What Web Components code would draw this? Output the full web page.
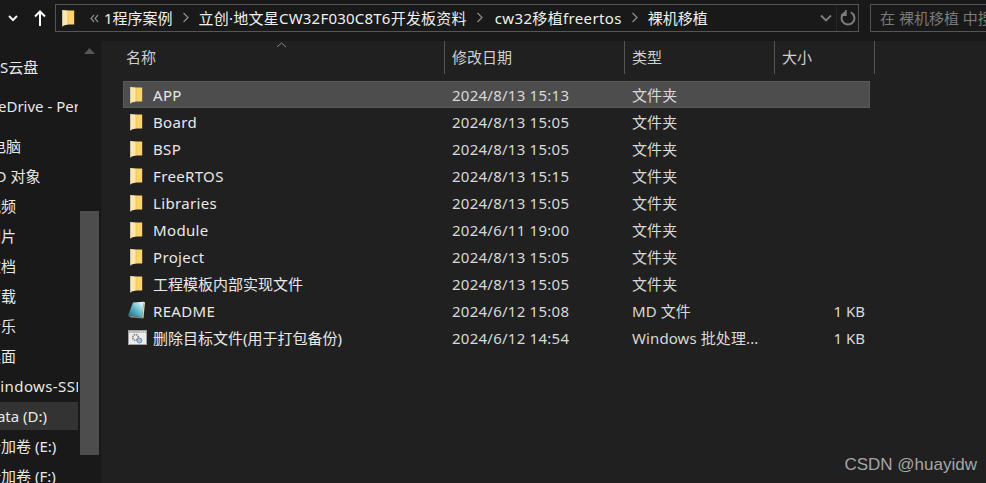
<!DOCTYPE html>
<html lang="zh">
<head>
<meta charset="utf-8">
<title>裸机移植</title>
<style>
  html, body { margin: 0; background: #202020; }
  body {
    font-family: "Noto Sans", "Noto Sans CJK SC", sans-serif;
    font-size: 15px;
    color: #e4e4e4;
  }
</style>
</head>
<body>
<explorer-window>
  <tool-bar slot="top">
    <crumb-item>1程序案例</crumb-item>
    <crumb-item style="letter-spacing:.22px;margin-right:2px">立创·地文星CW32F030C8T6开发板资料</crumb-item>
    <crumb-item style="letter-spacing:.35px">cw32移植freertos</crumb-item>
    <crumb-item last>裸机移植</crumb-item>
  </tool-bar>
  <nav-pane slot="nav">
    <nav-item shift="-23" gap="11">WPS云盘</nav-item>
    <nav-item shift="-23" gap="11">OneDrive - Personal</nav-item>
    <nav-item shift="-24" gap="12">此电脑</nav-item>
    <nav-item shift="-13">3D 对象</nav-item>
    <nav-item shift="-14">视频</nav-item>
    <nav-item shift="-14">图片</nav-item>
    <nav-item shift="-14">文档</nav-item>
    <nav-item shift="-14">下载</nav-item>
    <nav-item shift="-14">音乐</nav-item>
    <nav-item shift="-14">桌面</nav-item>
    <nav-item shift="-14" style="letter-spacing:.4px">Windows-SSD</nav-item>
    <nav-item shift="-14" active>Data (D:)</nav-item>
    <nav-item shift="-14">新加卷 (E:)</nav-item>
    <nav-item shift="-14">新加卷 (F:)</nav-item>
  </nav-pane>
  <file-list slot="main">
    <file-row selected name="APP" date="2024/8/13 15:13" type="文件夹"></file-row>
    <file-row name="Board" date="2024/8/13 15:05" type="文件夹"></file-row>
    <file-row name="BSP" date="2024/8/13 15:05" type="文件夹"></file-row>
    <file-row name="FreeRTOS" date="2024/8/13 15:15" type="文件夹"></file-row>
    <file-row name="Libraries" date="2024/8/13 15:05" type="文件夹"></file-row>
    <file-row name="Module" date="2024/6/11 19:00" type="文件夹"></file-row>
    <file-row name="Project" date="2024/8/13 15:05" type="文件夹"></file-row>
    <file-row name="工程模板内部实现文件" date="2024/8/13 15:05" type="文件夹"></file-row>
    <file-row icon="md" name="README" date="2024/6/12 15:08" type="MD 文件" size="1 KB"></file-row>
    <file-row icon="bat" name="删除目标文件(用于打包备份)" date="2024/6/12 14:54" type="Windows 批处理..." size="1 KB"></file-row>
  </file-list>
</explorer-window>

<script>
const FOLDER_SVG = `<svg width="15" height="18" viewBox="0 0 15 18">
  <path d="M7 1.5h6.2v14H7z" fill="#fbd36f"/>
  <path d="M1.6 1L7 1.6v13.9l-4.2.9-1.2 1z" fill="#fde7ac"/>
  <path d="M7 1.6v13.9" stroke="#e0b860" stroke-width=".7"/>
  <path d="M1.6 1v16.4" stroke="#f2e3b8" stroke-width=".8"/>
</svg>`;

class ExplorerWindow extends HTMLElement {
    constructor() {
        super();
        this.attachShadow({ mode: 'open' });
        this.shadowRoot.innerHTML = `
          <style>
            :host { display: flex; flex-direction: column; width: 986px; height: 483px; overflow: hidden; position: relative; background: #202020; }
            .body { display: flex; flex: 1; min-height: 0; }
            .mark { position: absolute; right: 9px; bottom: 8px; color: #a6a6a6; font: 17px "Liberation Sans", sans-serif; }
          </style>
          <slot name="top"></slot>
          <div class="body">
            <slot name="nav"></slot>
            <slot name="main"></slot>
          </div>
          <div class="mark">CSDN @huayidw</div>
        `;
    }
}

class ToolBar extends HTMLElement {
    constructor() {
        super();
        this.attachShadow({ mode: 'open' });
        this.shadowRoot.innerHTML = `
          <style>
            :host { display: flex; height: 41px; box-sizing: border-box; padding: 4px 0 0 0; background: #191919; align-items: flex-start; flex: none; }
            .nav { display: flex; align-items: center; width: 55px; height: 28px; flex: none; }
            .nav svg { display: block; }
            .down { margin-left: 8px; }
            .up { margin-left: 16px; }
            .addr { display: flex; align-items: center; width: 804px; height: 28px; box-sizing: border-box; border: 1px solid #555; background: #191919; flex: none; }
            .folder { margin-left: 5px; flex: none; display: flex; }
            .back { margin-left: 12px; width: 15px; flex: none; }
            .crumbs { display: flex; flex: 1; align-items: center; color: #f0f0f0; white-space: nowrap; margin-left: 1px; padding-bottom: 2px; }
            .drop { width: 14px; flex: none; display: flex; margin-right: 2px; }
            .refresh { width: 21px; height: 26px; flex: none; border-left: 1px solid #262626; display: flex; align-items: center; justify-content: center; }
            .search { width: 130px; height: 28px; box-sizing: border-box; margin-left: 11px; border: 1px solid #555; border-right: 0; color: #7a7a7a; line-height: 27px; padding-left: 9px; white-space: nowrap; overflow: hidden; flex: 1; }
          </style>
          <div class="nav">
            <svg class="down" width="10" height="7" viewBox="0 0 10 7"><path d="M1 1l4 4 4-4" fill="none" stroke="#f2f2f2" stroke-width="2"/></svg>
            <svg class="up" width="12" height="16" viewBox="0 0 12 16"><path d="M6 16V1.5M1 6.5l5-5 5 5" fill="none" stroke="#fff" stroke-width="2"/></svg>
          </div>
          <div class="addr">
            <span class="folder">${FOLDER_SVG}</span>
            <svg class="back" width="15" height="9" viewBox="0 0 15 9"><path d="M6 1L3 4.5 6 8M10 1L7 4.5 10 8" fill="none" stroke="#8a8a8a" stroke-width="1.2"/></svg>
            <div class="crumbs"><slot></slot></div>
            <span class="drop"><svg width="12" height="8" viewBox="0 0 12 8"><path d="M1 1.5l5 5 5-5" fill="none" stroke="#808080" stroke-width="1.8"/></svg></span>
            <span class="refresh"><svg width="16" height="16" viewBox="0 0 16 16"><path d="M5.2 2.4a6.4 6.4 0 1 0 5.6 0" fill="none" stroke="#7c7c7c" stroke-width="2"/><path d="M5.8 0v5H1" fill="none" stroke="#7c7c7c" stroke-width="1.8"/></svg></span>
          </div>
          <div class="search">在 裸机移植 中搜索</div>
        `;
    }
}

class CrumbItem extends HTMLElement {
    constructor() {
        super();
        this.attachShadow({ mode: 'open' });
        this.shadowRoot.innerHTML = `
          <style>
            :host { display: flex; align-items: center; }
            svg { margin: 0 9px 0 9px; display: block; }
            :host([last]) svg { display: none; }
          </style>
          <slot></slot>
          <svg width="8" height="11" viewBox="0 0 8 11"><path d="M1.5 1l4.5 4.5L1.5 10" fill="none" stroke="#8a8a8a" stroke-width="1.3"/></svg>
        `;
    }
}

class NavPane extends HTMLElement {
    constructor() {
        super();
        this.attachShadow({ mode: 'open' });
        this.shadowRoot.innerHTML = `
          <style>
            :host { display: flex; width: 101px; flex: none; background: #191919; position: relative; overflow: hidden; }
            .items { width: 78px; flex: none; padding-top: 1px; }
            .bar { position: relative; margin-left: 2px; width: 19px; }
            .up { position: absolute; left: 4px; top: 6px; }
            .thumb { position: absolute; left: 0; right: 0; top: 170px; height: 244px; background: #4d4d4d; }
          </style>
          <div class="items"><slot></slot></div>
          <div class="bar">
            <svg class="up" width="11" height="7" viewBox="0 0 11 7"><path d="M0 7l5.5-6L11 7z" fill="#555"/></svg>
            <div class="thumb"></div>
          </div>
        `;
    }
}

class NavItem extends HTMLElement {
    constructor() {
        super();
        this.attachShadow({ mode: 'open' });
        this.shadowRoot.innerHTML = `
          <style>
            :host { display: block; height: 28px; margin-bottom: 2px; overflow: hidden; white-space: nowrap; line-height: 28px; color: #e8e8e8; }
            :host([active]) { background: #333; }
            .t { display: block; }
          </style>
          <span class="t"><slot></slot></span>
        `;
    }
    connectedCallback() {
        this.shadowRoot.querySelector('.t').style.marginLeft = (this.getAttribute('shift') || 0) + 'px';
        if (this.hasAttribute('gap')) this.style.marginTop = this.getAttribute('gap') + 'px';
    }
}

class FileList extends HTMLElement {
    constructor() {
        super();
        this.attachShadow({ mode: 'open' });
        this.shadowRoot.innerHTML = `
          <style>
            :host { display: block; flex: 1; min-width: 0; background: #202020; border-left: 1px solid #1c1c1c; position: relative; }
            .head { display: grid; grid-template-columns: 343px 180px 150px 100px; height: 32px; color: #cfcfcf; }
            .head div { box-sizing: border-box; border-right: 1px solid #565656; padding-left: 7px; line-height: 33px; }
            .head div:first-child { padding-left: 24px; }
            .sort { position: absolute; left: 174px; top: 1px; }
            .rows { padding: 8px 0 0 21px; width: 747px; }
          </style>
          <div class="head"><div>名称</div><div>修改日期</div><div>类型</div><div>大小</div></div>
          <svg class="sort" width="11" height="6" viewBox="0 0 11 6"><path d="M1 5l4.5-4L10 5" fill="none" stroke="#8a8a8a"/></svg>
          <div class="rows"><slot></slot></div>
        `;
    }
}

class FileRow extends HTMLElement {
    constructor() {
        super();
        this.attachShadow({ mode: 'open' });
    }
    connectedCallback() {
        const a = n => this.getAttribute(n) || '';
        // latin names run slightly wider in the reference than in Noto Sans
        const spacing = /^[\x00-\x7f]+$/.test(a('name')) ? '.35px' : '0';
        this.shadowRoot.innerHTML = `
          <style>
            :host { display: grid; grid-template-columns: 30px 299px 180px 1fr 56px; align-items: center; height: 27px; box-sizing: border-box; color: #d8d8d8; white-space: nowrap; }
            :host([selected]) { background: #4d4d4d; box-shadow: inset 0 0 0 1px #5a5a5a; }
            .ic { display: flex; padding-left: 6px; }
            .name { color: #e8e8e8; letter-spacing: ${spacing}; }
            .date { letter-spacing: .25px; }
            .size { text-align: right; padding-right: 5px; grid-column: 5; }
            .ty { overflow: hidden; letter-spacing: .1px; }
          </style>
          <span class="ic">${this.iconSvg(a('icon'))}</span>
          <span class="name">${a('name')}</span>
          <span class="date">${a('date')}</span>
          <span class="ty">${a('type')}</span>
          <span class="size">${a('size')}</span>
        `;
    }
    iconSvg(kind) {
        if (kind === 'md') {
            return `<svg width="20" height="20" viewBox="0 0 20 20" style="margin-left:-2px">
              <defs><linearGradient id="md" x1="0" y1="1" x2="1" y2="0">
                <stop offset="0" stop-color="#17607a"/><stop offset=".5" stop-color="#62b9cb"/><stop offset=".85" stop-color="#cfeef2"/><stop offset="1" stop-color="#fff"/>
              </linearGradient></defs>
              <path d="M6 1.5L17 .8l-2 15.4L1 14.6z" fill="url(#md)"/>
              <path d="M17 .8l1 .6-1.6 16-1.4-1.2z" fill="#e9d9a8"/>
              <path d="M1 14.6l14 1.6 1.4 1.2L4 16.5z" fill="#8a8a8a"/>
            </svg>`;
        }
        if (kind === 'bat') {
            return `<svg width="19" height="15" viewBox="0 0 19 15" style="margin-left:-1px">
              <rect x=".5" y=".5" width="18" height="14" fill="#ededed" stroke="#a0a0a0"/>
              <rect x="1" y="1" width="17" height="2" fill="#bdbdbd"/>
              <path d="M12 2h1M14 2h1M16 2h1" stroke="#f4f4f4"/>
              <circle cx="7.5" cy="7.5" r="2.8" fill="none" stroke="#8a8f94" stroke-width="1.8" stroke-dasharray="1.5 .7"/>
              <circle cx="11.5" cy="10.5" r="2.4" fill="#a9c3dc" stroke="#6d8fb0"/>
            </svg>`;
        }
        return FOLDER_SVG;
    }
}

customElements.define('explorer-window', ExplorerWindow);
customElements.define('tool-bar', ToolBar);
customElements.define('crumb-item', CrumbItem);
customElements.define('nav-pane', NavPane);
customElements.define('nav-item', NavItem);
customElements.define('file-list', FileList);
customElements.define('file-row', FileRow);
</script>
</body>
</html>
